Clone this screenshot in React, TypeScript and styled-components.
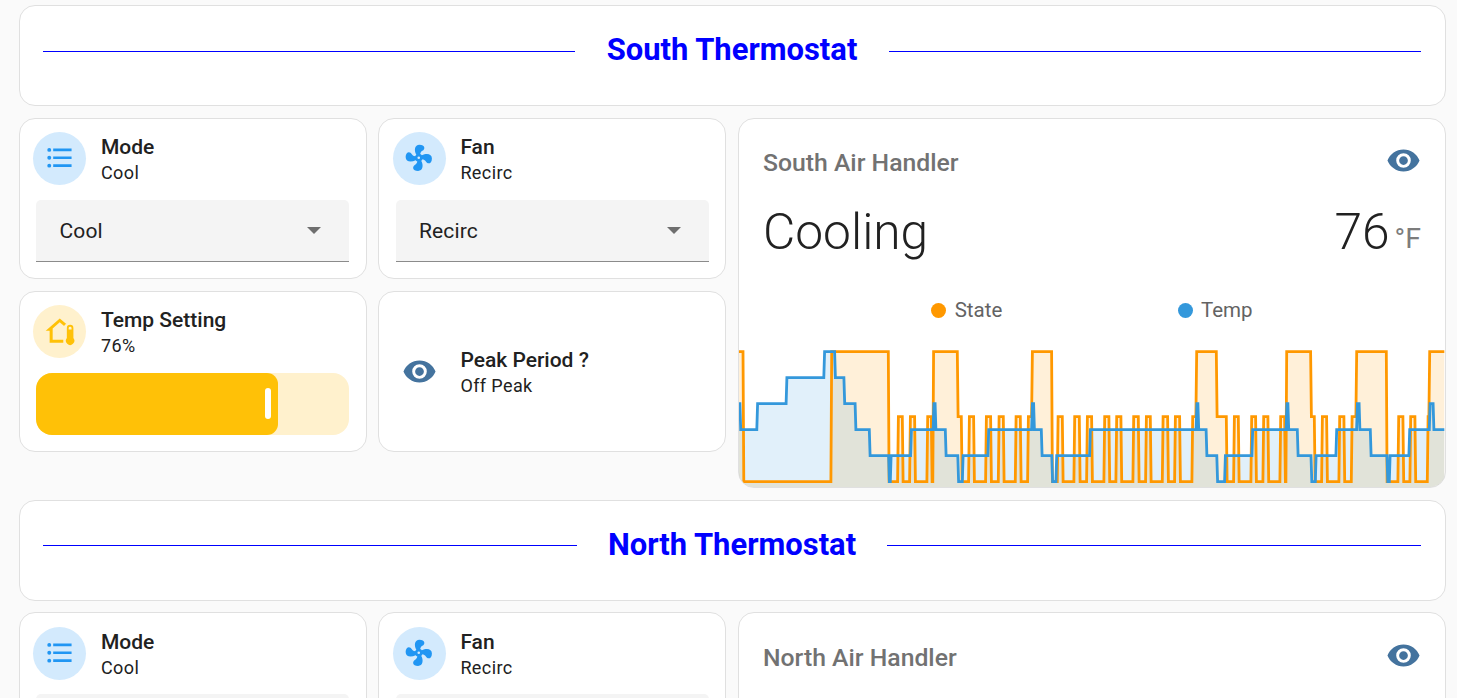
import React from 'react';
import styled, { createGlobalStyle } from 'styled-components';

type Step = [number, number]

interface Reading {
    state: string
    temp: number
    peak: string
}

const ICONS = {
    list: 'M7,5H21V7H7V5M7,13V11H21V13H7M4,4.5A1.5,1.5 0 0,1 5.5,6A1.5,1.5 0 0,1 4,7.5A1.5,1.5 0 0,1 2.5,6A1.5,1.5 0 0,1 4,4.5M4,10.5A1.5,1.5 0 0,1 5.5,12A1.5,1.5 0 0,1 4,13.5A1.5,1.5 0 0,1 2.5,12A1.5,1.5 0 0,1 4,10.5M7,19V17H21V19H7M4,16.5A1.5,1.5 0 0,1 5.5,18A1.5,1.5 0 0,1 4,19.5A1.5,1.5 0 0,1 2.5,18A1.5,1.5 0 0,1 4,16.5Z',
    fan: 'M12,11A1,1 0 0,0 11,12A1,1 0 0,0 12,13A1,1 0 0,0 13,12A1,1 0 0,0 12,11M12.5,2C17,2 17.11,5.57 14.75,6.75C13.76,7.24 13.32,8.29 13.13,9.22C13.61,9.42 14.03,9.73 14.35,10.13C18.05,8.13 22.03,8.92 22.03,12.5C22.03,17 18.46,17.1 17.28,14.73C16.78,13.74 15.72,13.3 14.79,13.11C14.59,13.59 14.28,14 13.88,14.34C15.87,18.03 15.08,22 11.5,22C7,22 6.91,18.42 9.27,17.24C10.25,16.75 10.69,15.71 10.89,14.79C10.4,14.59 9.97,14.27 9.65,13.87C5.96,15.85 2,15.07 2,11.5C2,7 5.56,6.89 6.74,9.26C7.24,10.25 8.29,10.68 9.22,10.87C9.41,10.39 9.73,9.97 10.14,9.65C8.15,5.96 8.94,2 12.5,2Z',
    homeThermometer: 'M12,2.6L1.3,12H4.3V21.1H14.7V18.9H6.6V10.2L12,5.5L15.3,8.4C15.6,7.8 16.3,7 17,6.8ZM19.9,7.5A2.5,2.5 0 0,0 17.4,10V17.6A3.2,3.2 0 1,0 22.4,17.6V10A2.5,2.5 0 0,0 19.9,7.5ZM19.9,8.9A1.1,1.1 0 0,1 21,10V11H18.8V10A1.1,1.1 0 0,1 19.9,8.9Z',
    eye: 'M12,9A3,3 0 0,0 9,12A3,3 0 0,0 12,15A3,3 0 0,0 15,12A3,3 0 0,0 12,9M12,17A5,5 0 0,1 7,12A5,5 0 0,1 12,7A5,5 0 0,1 17,12A5,5 0 0,1 12,17M12,4.5C7,4.5 2.73,7.61 1,12C2.73,16.39 7,19.5 12,19.5C17,19.5 21.27,16.39 23,12C21.27,7.61 17,4.5 12,4.5Z',
}

// Each step is [x where it ends, level], level 0 is idle and 5 is the top line
const stateSteps: Step[] = [
    [4.4, 5], [92.3, 0], [149.7, 5], [159, 0], [163.7, 2.5], [171, 0], [176, 2.5], [188.3, 0], [192.7, 2.5],
    [194.2, 0], [218.7, 5], [222.7, 2.5], [230, 0], [235, 2.5], [247, 0], [252, 2.5], [259.7, 0],
    [264.7, 2.5], [276.7, 0], [281.7, 2.5], [289, 0], [293, 2.5], [313, 5], [318.7, 0], [323.7, 2.5],
    [335.3, 0], [340.7, 2.5], [348, 0], [353, 2.5], [365.3, 0], [370.3, 2.5], [377.3, 0], [382.3, 2.5],
    [394.3, 0], [399.7, 2.5], [407, 0], [411.7, 2.5], [423.7, 0], [429, 2.5], [436, 0], [441, 2.5],
    [453.3, 0], [457.3, 2.5], [477.7, 5], [487.7, 2.5], [495, 0], [499.7, 2.5], [512.3, 0], [517, 2.5],
    [524.3, 0], [529.3, 2.5], [541.3, 0], [546, 2.5], [547.3, 0], [572, 5], [575.7, 2.5], [583, 0],
    [588, 2.5], [600.3, 0], [605.3, 2.5], [612.7, 0], [617.3, 2.5], [647.7, 5], [659.3, 0], [664.3, 2.5],
    [671.3, 0], [676.3, 2.5], [688.7, 0], [690.3, 2.5], [705.3, 5],
]

const tempSteps: Step[] = [
    [1.3, 3], [18.2, 2], [47.5, 3], [85.2, 4], [96, 5], [105.3, 4], [116.5, 3], [130.7, 2], [150, 1],
    [151.7, 0], [172, 1], [194.5, 2], [196.5, 3], [206.7, 2], [219.2, 1], [223.7, 0], [249.3, 1],
    [293, 2], [295, 3], [302.7, 2], [313.2, 1], [317.3, 0], [351, 1], [457.5, 2], [459.3, 3],
    [467.5, 2], [478.2, 1], [486, 0], [513.3, 1], [547.5, 2], [549.3, 3], [558.7, 2], [572.4, 1],
    [576.7, 0], [597.3, 1], [618, 2], [620.5, 3], [631.7, 2], [648.4, 1], [650.7, 0], [670.3, 1],
    [690.7, 2], [694.5, 3], [705.3, 2],
]

const levelY = (level: number) => 137.6 - level * 26

const linePath = (steps: Step[]) => {
    let d = `M0,${levelY(steps[0][1])}`
    steps.forEach(([x, level], i) => {
        const next = steps[i + 1]
        if (next) {
            d += `L${x - 0.4},${levelY(level)}L${x + 0.4},${levelY(next[1])}`
        } else {
            d += `L${x},${levelY(level)}`
        }
    })
    return d
}

const Icon = ({ name, size }: { name: keyof typeof ICONS, size: number }) => (
    <svg width={size} height={size} viewBox="0 0 24 24" fill="currentColor" fillRule="evenodd">
        <path d={ICONS[name]} />
    </svg>
)

const Graph = () => {
    const state = linePath(stateSteps)
    const temp = linePath(tempSteps)
    return (
        <GraphSvg viewBox="0 0 706 143" preserveAspectRatio="none">
            <path d={`${state}V143H0Z`} fill="#ff9800" fillOpacity="0.15" />
            <path d={`${temp}V143H0Z`} fill="#3498db" fillOpacity="0.15" />
            <path d={state} fill="none" stroke="#ff9800" strokeWidth="2.8" />
            <path d={temp} fill="none" stroke="#3498db" strokeWidth="2.8" />
        </GraphSvg>
    )
}

const SelectCard = ({ icon, title, value }: { icon: 'list' | 'fan', title: string, value: string }) => (
    <Tile>
        <TileHead>
            <Shape $color="#2196f3" $bg="#d3eafd">
                <Icon name={icon} size={31.5} />
            </Shape>
            <TileInfo>
                <Primary>{title}</Primary>
                <Secondary>{value}</Secondary>
            </TileInfo>
        </TileHead>
        <Select>
            <span>{value}</span>
            <Arrow />
        </Select>
    </Tile>
)

const Thermostat = ({ name, reading }: { name: string, reading?: Reading }) => (
    <Section>
        <HeaderCard>
            <Line />
            <Heading>{name} Thermostat</Heading>
            <Line />
        </HeaderCard>
        <Columns>
            <Tiles>
                <SelectCard icon="list" title="Mode" value="Cool" />
                <SelectCard icon="fan" title="Fan" value="Recirc" />
                {reading && (
                    <>
                        <Tile>
                            <TileHead>
                                <Shape $color="#ffc107" $bg="#fff1cd">
                                    <Icon name="homeThermometer" size={31.5} />
                                </Shape>
                                <TileInfo>
                                    <Primary>Temp Setting</Primary>
                                    <Secondary>{reading.temp}%</Secondary>
                                </TileInfo>
                            </TileHead>
                            <Slider>
                                <SliderFill>
                                    <Handle />
                                </SliderFill>
                            </Slider>
                        </Tile>
                        <Tile $centered>
                            <TileHead>
                                <Shape $color="#44739e">
                                    <Icon name="eye" size={35} />
                                </Shape>
                                <TileInfo>
                                    <Primary>Peak Period ?</Primary>
                                    <Secondary>{reading.peak}</Secondary>
                                </TileInfo>
                            </TileHead>
                        </Tile>
                    </>
                )}
            </Tiles>
            <GraphCard>
                <GraphHead>
                    <GraphTitle>{name} Air Handler</GraphTitle>
                    <EyeWrap>
                        <Icon name="eye" size={35} />
                    </EyeWrap>
                </GraphHead>
                {reading && (
                    <>
                        <States>
                            <State>{reading.state}</State>
                            <State>{reading.temp}<Unit>°F</Unit></State>
                        </States>
                        <Legend>
                            <LegendItem><Dot $color="#ff9800" />State</LegendItem>
                            <LegendItem><Dot $color="#3498db" />Temp</LegendItem>
                        </Legend>
                        <Graph />
                    </>
                )}
            </GraphCard>
        </Columns>
    </Section>
)

export default function App() {
    return (
        <>
            <GlobalStyle />
            <Page>
                <Thermostat name="South" reading={{ state: 'Cooling', temp: 76, peak: 'Off Peak' }} />
                <Thermostat name="North" />
            </Page>
        </>
    )
}

const GlobalStyle = createGlobalStyle`
    *{
        box-sizing: border-box;
    }
    body{
        margin: 0;
        background: #fafafa;
        color: #212121;
        font-family: Roboto, sans-serif;
    }
    svg{
        display: block;
        flex-shrink: 0;
    }
`

const Page = styled.main`
    height: 100vh;
    overflow: hidden;
    padding: 5.4px 11px 0 19px;
`

const Section = styled.section`
    width: 1427px;
    margin-bottom: 11.9px;
`

const Card = styled.div`
    background: #fff;
    border: 1px solid #e0e0e0;
    border-radius: 16px;
`

const HeaderCard = styled(Card)`
    height: 101px;
    margin-bottom: 11.8px;
    padding: 22px 24px 0 23px;
    display: flex;
    align-items: flex-start;
    gap: 31.2px;
`

const Line = styled.div`
    flex: 1;
    height: 1px;
    margin-top: 22.8px;
    background: #0000ff;
`

const Heading = styled.h2`
    margin: 0;
    font-size: 30.95px;
    line-height: 44px;
    font-weight: 700;
    color: #0000ff;
`

const Columns = styled.div`
    display: grid;
    grid-template-columns: 707px 708px;
    column-gap: 12px;
    height: 369.5px;
`

const Tiles = styled.div`
    display: grid;
    grid-template-columns: 347.6px 347.6px;
    grid-template-rows: 160.9px 160.9px;
    gap: 11.6px 11.8px;
`

const Tile = styled(Card)<{ $centered?: boolean }>`
    padding: ${p => (p.$centered ? '0 13.2px' : '13.2px 16.4px 0 16.2px')};
    display: flex;
    flex-direction: column;
    justify-content: ${p => (p.$centered ? 'center' : 'flex-start')};
    ${p => !p.$centered && '& > :first-child{ margin-left: -3px; }'}
`

const TileHead = styled.div`
    display: flex;
    align-items: center;
    gap: 14.8px;
    height: 53px;
`

const Shape = styled.div<{ $color: string, $bg?: string }>`
    width: 53px;
    height: 53px;
    padding-bottom: ${p => (p.$bg ? '1.5px' : 0)};
    border-radius: 50%;
    display: flex;
    align-items: center;
    justify-content: center;
    color: ${p => p.$color};
    background: ${p => p.$bg || 'transparent'};
`

const TileInfo = styled.div`
    display: flex;
    flex-direction: column;
    padding-top: 3.1px;
`

const Primary = styled.span`
    font-size: 21px;
    font-weight: 500;
    line-height: 24.9px;
`

const Secondary = styled.span`
    font-size: 18px;
    line-height: 25px;
    letter-spacing: 0.4px;
`

const Select = styled.div`
    height: 62px;
    margin-top: 14.8px;
    padding: 0 27.8px 0 23.3px;
    display: flex;
    align-items: center;
    justify-content: space-between;
    background: #f4f4f4;
    border-bottom: 1px solid #8b8b8b;
    border-radius: 5px 5px 0 0;
    font-size: 21px;
    letter-spacing: 0.15px;
`

const Arrow = styled.div`
    border: 7.5px solid transparent;
    border-top-color: #6e6e6e;
    border-bottom: 0;
`

const Slider = styled.div`
    height: 62px;
    margin-top: 14.8px;
    border-radius: 16px;
    overflow: hidden;
    background: #fff1cd;
`

const SliderFill = styled.div`
    width: 242.3px;
    height: 100%;
    padding-right: 7px;
    border-radius: 0 11px 11px 0;
    background: #ffc107;
    display: flex;
    align-items: center;
    justify-content: flex-end;
`

const Handle = styled.div`
    width: 6px;
    height: 31px;
    border-radius: 3px;
    background: #fff;
`

const GraphCard = styled(Card)`
    overflow: hidden;
    display: flex;
    flex-direction: column;
`

const GraphHead = styled.div`
    height: 83.4px;
    padding: 0 24px;
    display: flex;
    align-items: center;
    justify-content: space-between;
`

const GraphTitle = styled.div`
    padding-top: 4.2px;
    font-size: 24.75px;
    font-weight: 500;
    color: #727272;
`

const EyeWrap = styled.div`
    color: #44739e;
`

const States = styled.div`
    height: 57.6px;
    padding: 1.6px 24px 0;
    display: flex;
    align-items: center;
    justify-content: space-between;
`

const State = styled.div`
    font-size: 49.7px;
    font-weight: 300;
    line-height: 56px;
`

const Unit = styled.span`
    margin-left: 5px;
    font-size: 28.5px;
    font-weight: 400;
    line-height: 1;
    vertical-align: 1px;
    color: #7c7c7c;
`

const Legend = styled.div`
    height: 84px;
    padding: 17px 17px 0;
    display: flex;
    align-items: center;
    justify-content: space-evenly;
    color: #636363;
`

const LegendItem = styled.div`
    display: flex;
    align-items: center;
    gap: 8.3px;
    height: 26px;
    font-size: 20.5px;
`

const Dot = styled.span<{ $color: string }>`
    width: 15px;
    height: 15px;
    border-radius: 50%;
    background: ${p => p.$color};
`

const GraphSvg = styled.svg`
    width: 706px;
    height: 143px;
    margin-top: auto;
`
